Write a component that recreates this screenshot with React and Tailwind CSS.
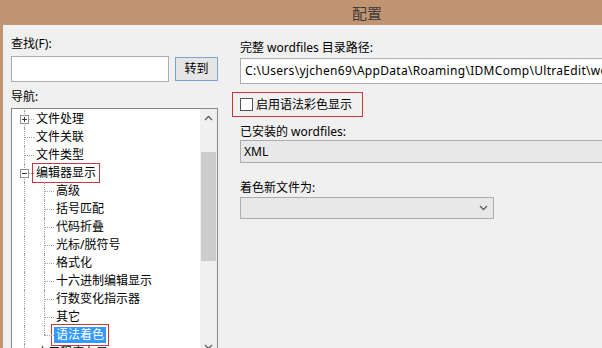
const font = { fontFamily: '"Noto Sans", "Noto Sans CJK SC", sans-serif' }

const tree = [
  { level: 0, label: '文件处理', expander: '+' },
  { level: 0, label: '文件关联' },
  { level: 0, label: '文件类型' },
  { level: 0, label: '编辑器显示', expander: '-', boxed: true },
  { level: 1, label: '高级' },
  { level: 1, label: '括号匹配' },
  { level: 1, label: '代码折叠' },
  { level: 1, label: '光标/脱符号' },
  { level: 1, label: '格式化' },
  { level: 1, label: '十六进制编辑显示' },
  { level: 1, label: '行数变化指示器' },
  { level: 1, label: '其它' },
  { level: 1, label: '语法着色', selected: true, boxed: true, last: true },
  { level: 0, label: '应用程序布局' },
]

function Chevron({ up }) {
  return (
    <svg width="9" height="6" viewBox="0 0 9 6" className="block">
      <path
        d={up ? 'M1 5 L4.5 1.5 L8 5' : 'M1 1 L4.5 4.5 L8 1'}
        fill="none"
        stroke="#606060"
        strokeWidth="1.4"
      />
    </svg>
  )
}

function TreeRow({ item }) {
  const { level, label, expander, selected, boxed, last } = item
  return (
    <div className="flex items-center h-[18px]">
      {/* root column */}
      <div className="relative w-[20px] h-full shrink-0">
        <span className="absolute left-[10px] top-0 bottom-0 border-l border-dotted border-[#a0a0a0]" />
        {level === 0 && (
          <span className="absolute left-[10px] right-0 top-[9px] border-t border-dotted border-[#a0a0a0]" />
        )}
        {expander && (
          <span className="absolute left-[6px] top-[5px] w-[9px] h-[9px] border border-[#919191] bg-white flex items-center justify-center">
            <span className="absolute w-[5px] h-px bg-[#333]" />
            {expander === '+' && <span className="absolute w-px h-[5px] bg-[#333]" />}
          </span>
        )}
      </div>
      {level === 1 && (
        <div className="relative w-[20px] h-full shrink-0">
          <span
            className={`absolute left-[10px] top-0 border-l border-dotted border-[#a0a0a0] ${last ? 'h-[9px]' : 'bottom-0'}`}
          />
          <span className="absolute left-[10px] right-0 top-[9px] border-t border-dotted border-[#a0a0a0]" />
        </div>
      )}
      <span
        className={`px-[2px] h-[16px] leading-[16px] whitespace-nowrap ${
          selected ? 'bg-[#3399ff] text-white' : 'text-black'
        } ${boxed ? (selected ? 'outline outline-[#c8373b] outline-offset-2' : 'outline outline-[#c8373b] outline-offset-1') : ''}`}
      >
        {label}
      </span>
    </div>
  )
}

export default function App() {
  return (
    <div
      className="w-[602px] h-[348px] overflow-hidden flex flex-col bg-[#c19571] text-[12px] text-black"
      style={font}
    >
      {/* Title bar */}
      <div className="h-[25px] shrink-0 flex items-center justify-center pl-[132px]">
        <span className="text-[15px] leading-[20px] text-[#3c3c3c]">配置</span>
      </div>

      {/* Body */}
      <div className="flex-1 ml-[3px] bg-[#f0f0f0] flex pl-[8px] pt-[11px] gap-[22px] overflow-hidden">
        {/* Left: search + navigation */}
        <div className="w-[207px] shrink-0 flex flex-col">
          <div className="h-[16px] leading-[16px]">查找(F):</div>
          <div className="flex items-center mt-[4px] h-[26px]">
            <div className="w-[158px] h-[26px] bg-white border border-[#abadb3]" />
            <button className="ml-[6px] w-[43px] h-[24px] bg-[#e5e5e5] border border-[#7da2ce] leading-[20px]">
              转到
            </button>
          </div>
          <div className="h-[16px] leading-[16px] mt-[7px]">导航:</div>
          <div className="mt-[3px] h-[248px] shrink-0 bg-white border border-[#828790] flex">
            <div className="flex-1 pl-[2px] pt-[1px] overflow-hidden">
              {tree.map((item) => (
                <TreeRow key={item.label} item={item} />
              ))}
            </div>
            <div className="w-[17px] bg-[#f0f0f0] flex flex-col items-center">
              <div className="h-[17px] flex items-center justify-center">
                <Chevron up />
              </div>
              <div className="h-[26px]" />
              <div className="w-[15px] h-[109px] bg-[#cdcdcd]" />
              <div className="flex-1" />
              <div className="h-[17px] flex items-center justify-center">
                <Chevron />
              </div>
            </div>
          </div>
        </div>

        {/* Right: wordfiles settings */}
        <div className="flex-1 flex flex-col pt-[4px] min-w-0">
          <div className="h-[16px] leading-[16px] whitespace-nowrap">完整 wordfiles 目录路径:</div>
          <div className="mt-[2px] h-[26px] w-[420px] bg-white border border-[#abadb3] flex items-center pl-[4px] whitespace-nowrap overflow-hidden tracking-[0.3px]">
            C:\Users\yjchen69\AppData\Roaming\IDMComp\UltraEdit\wordfiles
          </div>
          <div className="mt-[8px] -ml-[8px] self-start h-[25px] border border-[#c8373b] flex items-center pl-[7px] pr-[10px]">
            <span className="w-[13px] h-[13px] bg-white border border-[#555] shrink-0" />
            <span className="ml-[3px] leading-[16px] whitespace-nowrap">启用语法彩色显示</span>
          </div>
          <div className="mt-[7px] h-[16px] leading-[16px] whitespace-nowrap">已安装的 wordfiles:</div>
          <div className="h-[23px] w-[420px] bg-[#e8e8e8] border border-[#acacac] flex items-center pl-[3px]">
            XML
          </div>
          <div className="mt-[17px] h-[16px] leading-[16px] whitespace-nowrap">着色新文件为:</div>
          <div className="mt-[1px] h-[22px] w-[254px] bg-[#e8e8e8] border border-[#acacac] flex items-center justify-end pr-[5px]">
            <Chevron />
          </div>
        </div>
      </div>
    </div>
  )
}
